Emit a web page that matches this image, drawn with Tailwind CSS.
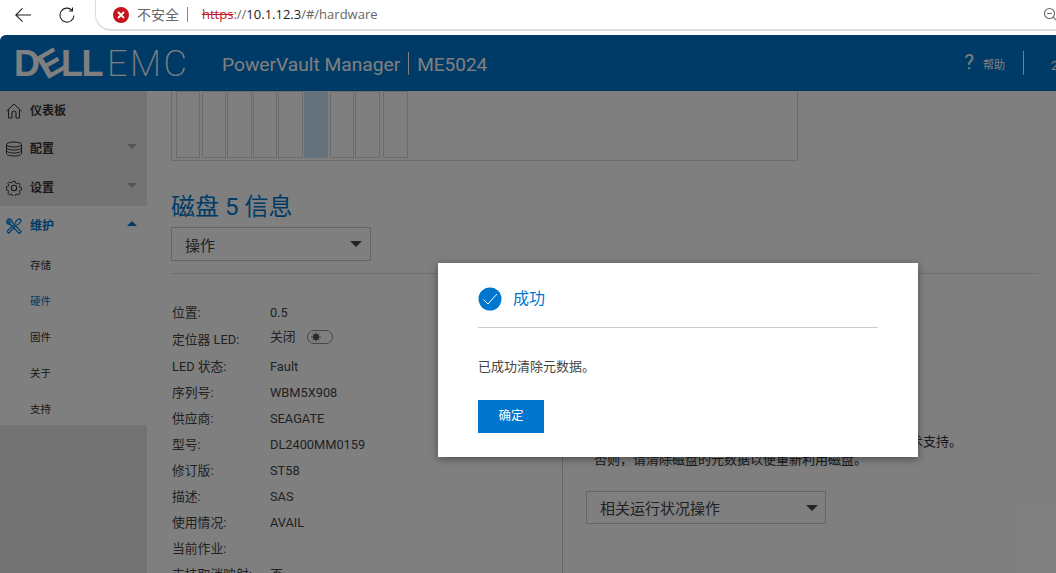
<!DOCTYPE html>
<html lang="zh">
<head>
    <meta charset="UTF-8">
    <title>PowerVault Manager</title>
    <script src="https://cdn.jsdelivr.net/npm/@tailwindcss/browser@4"></script>
</head>
<body class="h-[573px] w-[1056px] overflow-hidden bg-white font-['Roboto','Noto_Sans_CJK_SC',sans-serif]">
    <!-- browser bar -->
    <div class="flex h-[35px] items-start bg-white">
        <svg class="ml-[15px] mt-[7px] h-4 w-4" viewBox="0 0 16 16" fill="none" stroke="#222" stroke-width="1.1"><path d="M16 8H.8M7.5 1.3.8 8l6.7 6.7"/></svg>
        <svg class="ml-[28px] mt-[7px] h-4 w-4" viewBox="0 0 16 16" fill="none" stroke="#222" stroke-width="1.1"><path d="M15 8.500A7 7 0 1 1 13 3.200M13.500.5v3.500H10"/></svg>
        <div class="ml-[20px] flex h-[31px] flex-1 items-center rounded-bl-[16px] border-b-2 border-l border-[#ddd] pl-[17px]">
            <div class="flex h-4 w-4 items-center justify-center rounded-full bg-[#c4161c]">
                <svg class="h-2 w-2" viewBox="0 0 8 8" fill="none" stroke="#fff" stroke-width="1.8"><path d="M1 1l6 6M7 1 1 7"/></svg>
            </div>
            <span class="ml-2 pt-px text-[14px] text-[#666]">不安全</span>
            <span class="ml-[8px] h-[15px] w-px bg-[#888]"></span>
            <span class="ml-[14px] pt-px font-['Open_Sans',sans-serif] text-[13px] text-[#666]"><span class="text-[#c4161c] line-through">https</span>://<span class="text-[#222]">10.1.12.3</span>/#/hardware</span>
            <svg class="ml-auto mr-[-3px] h-4 w-4" viewBox="0 0 16 16" fill="none" stroke="#666" stroke-width="1.1"><circle cx="6.5" cy="6.5" r="5"/><path d="M4.2 6.5h4.6M10.2 10.2 15 15"/></svg>
        </div>
    </div>

    <div class="relative h-[538px] overflow-hidden rounded-tl-md bg-white">
        <header class="flex h-14 items-center bg-[#0076ce] text-white">
            <div class="ml-[14px] mt-[2px] flex h-9 w-[176px] items-center whitespace-nowrap">
                <span class="font-['Liberation_Sans',sans-serif] text-[36px] font-bold tracking-[-1.5px]">D<span class="inline-block -rotate-[30deg] text-[36px]">E</span>LL</span>
                <span class="ml-[5px] text-[36px] font-extralight tracking-[2.5px]">EMC</span>
            </div>
            <span class="ml-[32px] pt-[5px] text-[19.2px]">PowerVault Manager</span>
            <span class="mx-[8px] h-[23px] w-px bg-white"></span>
            <span class="pt-[5px] text-[19px]">ME5024</span>
            <span class="ml-auto mb-[3px] text-[20px] leading-none">?</span>
            <span class="ml-[9px] pt-[6px] text-[11px]">帮助</span>
            <span class="ml-[18px] h-6 w-px bg-white"></span>
            <span class="ml-[27px] w-[5px] overflow-hidden pt-[5px] text-[13px]">2</span>
        </header>

        <div class="flex h-[482px]">
            <!-- sidebar -->
            <nav class="flex w-[147px] shrink-0 flex-col bg-[#e6e6e6]">
                <div class="h-[115px] text-[12px] font-bold text-[#333]">
                    <div class="flex h-[38px] items-center pl-[6px] pt-[1px]">
                        <svg class="h-4 w-4" viewBox="0 0 16 16" fill="none" stroke="#333" stroke-width="1"><path d="M.5 8.200 8 1l7.500 7.200M2.500 7v8h3.500v-5a2 2 0 0 1 4 0v5h3.500V7"/></svg>
                        <span class="ml-2">仪表板</span>
                    </div>
                    <div class="flex h-[39px] items-center pl-[6px]">
                        <svg class="h-4 w-4" viewBox="0 0 16 16" fill="none" stroke="#333" stroke-width="1"><ellipse cx="8" cy="3.500" rx="7.500" ry="2.500"/><path d="M.5 3.500v9c0 1.400 3.400 2.500 7.500 2.500s7.500-1.100 7.500-2.500v-9M.5 6.500c0 1.400 3.400 2.500 7.500 2.500s7.500-1.100 7.500-2.500M.5 9.500c0 1.400 3.400 2.500 7.500 2.500s7.500-1.100 7.500-2.500"/></svg>
                        <span class="ml-2">配置</span>
                        <span class="ml-auto mr-[10px] mb-[4px] h-0 w-0 border-x-[5px] border-t-[5px] border-x-transparent border-t-[#aaa]"></span>
                    </div>
                    <div class="flex h-[38px] items-center pl-[6px] pt-[1px]">
                        <svg class="h-4 w-4" viewBox="0 0 16 16" fill="none" stroke="#333" stroke-width="1.100"><circle cx="8" cy="8" r="2.700"/><path d="M6.700.6h2.600l.4 2 1.500.7 1.800-1 1.800 1.800-1 1.800.7 1.500 2 .4v2.400l-2 .4-.7 1.500 1 1.800-1.800 1.800-1.800-1-1.500.7-.4 2H6.700l-.4-2-1.500-.7-1.800 1-1.800-1.800 1-1.800-.7-1.500-2-.4V6.800l2-.4.700-1.500-1-1.800L2.900 1.300l1.800 1 1.500-.7z" transform="translate(.8 .8) scale(.9)"/></svg>
                        <span class="ml-2">设置</span>
                        <span class="ml-auto mr-[10px] mb-[5px] h-0 w-0 border-x-[5px] border-t-[5px] border-x-transparent border-t-[#aaa]"></span>
                    </div>
                </div>
                <div class="h-[219px] bg-white">
                    <div class="flex h-[38px] items-center pl-[6px] pt-[1px] text-[12px] font-bold text-[#0076ce]">
                        <svg class="h-4 w-4" viewBox="0 0 16 16" fill="none" stroke="#0a84dc" stroke-width="1.300" stroke-linejoin="round"><path d="M1.800 1.200 4.200 3.500v1.300H2.900L.8 2.700C.3 4.600 1.600 6.600 4 6.200L13.400 15.500 15.300 13.600 6 4.300C6.500 2 4 .3 1.800 1.200z"/><path d="M1 13.300 8.800 5.900M2.700 15.200 10.300 7.300M1 13.300 2.700 15.200M9 5.500 10.500 2.500 13.500.8 15.200 2.500 13.500 5.500 10.600 7"/></svg>
                        <span class="ml-2">维护</span>
                        <span class="ml-auto mr-[10px] mb-[5px] h-0 w-0 border-x-[5px] border-b-[5px] border-x-transparent border-b-[#0076ce]"></span>
                    </div>
                    <ul class="pl-[30px] pt-[4px] text-[10.5px] text-[#333]">
                        <li class="flex h-9 items-center">存储</li>
                        <li class="flex h-9 items-center text-[#0076ce]">硬件</li>
                        <li class="flex h-9 items-center">固件</li>
                        <li class="flex h-9 items-center">关于</li>
                        <li class="flex h-9 items-center">支持</li>
                    </ul>
                </div>
            </nav>

            <!-- content -->
            <main class="min-w-0 flex-1 overflow-hidden pl-6 pr-[17px]">
                <div class="flex h-[70px] w-[627px] border-x border-b border-[#d8d8d8] pl-[4px]">
                    <span class="h-[67px] w-6 border border-[#d8d8d8]"></span>
                    <span class="ml-[2px] h-[67px] w-6 border border-[#d8d8d8]"></span>
                    <span class="ml-[1px] h-[67px] w-[25px] border border-[#d8d8d8]"></span>
                    <span class="ml-[1px] h-[67px] w-6 border border-[#d8d8d8]"></span>
                    <span class="ml-[1px] h-[67px] w-[25px] border border-[#d8d8d8]"></span>
                    <span class="ml-[1px] h-[67px] w-6 bg-[#cce4f8]"></span>
                    <span class="ml-[2px] h-[67px] w-6 border border-[#d8d8d8]"></span>
                    <span class="ml-[1px] h-[67px] w-[25px] border border-[#d8d8d8]"></span>
                    <span class="ml-[3px] h-[67px] w-[25px] border border-[#d8d8d8]"></span>
                </div>
                <h2 class="mt-[28px] text-[24px] font-normal leading-[36px] text-[#0076ce]">磁盘 5 信息</h2>
                <div class="mt-[2px] flex h-[34px] w-[200px] items-center justify-between border border-[#ccc] pl-[13px] pr-[8px] text-[15px] text-[#444]">
                    <span class="pt-[4px]">操作</span>
                    <span class="h-0 w-0 border-x-[6px] border-t-[6px] border-x-transparent border-t-[#444]"></span>
                </div>
                <div class="mt-[12px] flex border-t border-[#e0e0e0]">
                    <dl class="grid h-[400px] w-[392px] shrink-0 auto-rows-[26px] grid-rows-[26px_28px] grid-cols-[98px_1fr] content-start items-center border-r border-[#ccc] pl-[1px] pt-[26px] text-[12.8px] text-[#444]">
                        <dt>位置:</dt><dd>0.5</dd>
                        <dt>定位器 LED:</dt><dd class="flex items-center pb-[6px]">关闭<span class="ml-[11px] flex h-[14px] w-[26px] items-center rounded-full border border-[#888] pl-[3px]"><svg class="h-[10px] w-[10px]" viewBox="0 0 10 10" fill="#555" stroke="#555" stroke-width=".8"><circle cx="5" cy="5" r="2.800"/><path d="M5 0v10M0 5h10M1.500 1.500l7 7M8.500 1.500l-7 7"/></svg></span></dd>
                        <dt>LED 状态:</dt><dd>Fault</dd>
                        <dt>序列号:</dt><dd>WBM5X908</dd>
                        <dt>供应商:</dt><dd>SEAGATE</dd>
                        <dt>型号:</dt><dd>DL2400MM0159</dd>
                        <dt>修订版:</dt><dd>ST58</dd>
                        <dt>描述:</dt><dd>SAS</dd>
                        <dt>使用情况:</dt><dd>AVAIL</dd>
                        <dt>当前作业:</dt><dd></dd>
                        <dt>支持取消映射:</dt><dd>否</dd>
                    </dl>
                    <div class="pl-[23px] pt-[159px] text-[13px] text-[#333]">
                        <p class="whitespace-nowrap pl-[12px] leading-[18px]">如果磁盘仍然报告故障状态或无法恢复使用，请联系技术支持。</p>
                        <p class="whitespace-nowrap pl-[8px] leading-[18px]">否则，请清除磁盘的元数据以便重新利用磁盘。</p>
                        <div class="mt-[22px] flex h-[33px] w-[240px] items-center justify-between border border-[#ccc] pl-[13px] pr-[7px] text-[15px] text-[#444]">
                            <span class="pt-[4px]">相关运行状况操作</span>
                            <span class="h-0 w-0 border-x-[6px] border-t-[6px] border-x-transparent border-t-[#444]"></span>
                        </div>
                    </div>
                </div>
            </main>
        </div>

        <!-- modal -->
        <div class="absolute inset-0 bg-black/50"></div>
        <div class="absolute left-[438px] top-[228px] h-[194px] w-[480px] bg-white px-10 shadow-[0_2px_8px_rgba(0,0,0,0.4)]">
            <div class="flex h-[65px] items-center border-b border-[#ccc] pt-[8px]">
                <svg class="h-6 w-6" viewBox="0 0 24 24"><circle cx="12" cy="12" r="11.500" fill="#0076ce"/><path d="M5.500 12.500 10 17l9-10" fill="none" stroke="#fff" stroke-width="1"/></svg>
                <span class="ml-[11px] text-[16px] text-[#0076ce]">成功</span>
            </div>
            <p class="mt-[29px] text-[13px] leading-5 text-[#444]">已成功清除元数据。</p>
            <button class="mt-[23px] block h-[33px] w-[66px] bg-[#0076ce] text-[12.500px] text-white">确定</button>
        </div>
    </div>
</body>
</html>
